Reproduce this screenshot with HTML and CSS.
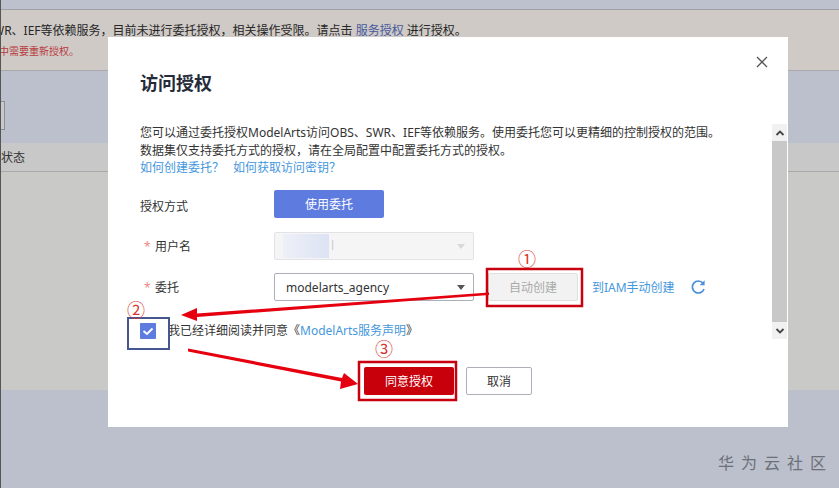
FILE: index.html
```html
<!DOCTYPE html>
<html lang="zh-CN">
<head>
    <meta charset="UTF-8">
    <title>访问授权</title>
    <link rel="stylesheet" href="styles.css">
</head>
<body>
    <div class="page">
        <div class="top-strip"></div>
        <div class="notice">
            <p class="notice-main">WR、IEF等依赖服务，目前未进行委托授权，相关操作受限。请点击 <a class="notice-link">服务授权</a> 进行授权。</p>
            <p class="notice-warn">中需要重新授权。</p>
        </div>
        <div class="toolbar"><div class="search-box"></div></div>
        <div class="table-head">状态</div>
        <div class="table-body"></div>
        <div class="page-foot"><span class="watermark">华为云社区</span></div>
    </div>

    <div class="dialog">
        <h2 class="dialog-title">访问授权</h2>
        <svg class="dialog-close" width="12" height="12" viewBox="0 0 12 12"><path d="M1 1 11 11M11 1 1 11" stroke="#555" stroke-width="1.3" fill="none"/></svg>
        <div class="dialog-body">
            <div class="form">
                <p class="intro">您可以通过委托授权ModelArts访问OBS、SWR、IEF等依赖服务。使用委托您可以更精细的控制授权的范围。<br>数据集仅支持委托方式的授权，请在全局配置中配置委托方式的授权。<br><a class="link">如何创建委托？</a><a class="link link-next">如何获取访问密钥？</a></p>
                <div class="row row-first">
                    <span class="label label-first">授权方式</span>
                    <button class="btn btn-blue">使用委托</button>
                </div>
                <div class="row">
                    <span class="label"><i class="star">*</i>用户名</span>
                    <div class="select select-off">
                        <span class="blur"></span><span class="blur-tail">l</span>
                        <span class="caret caret-off"></span>
                    </div>
                </div>
                <div class="row">
                    <span class="label"><i class="star">*</i>委托</span>
                    <div class="select">
                        <span>modelarts_agency</span>
                        <span class="caret"></span>
                    </div>
                    <button class="btn btn-off">自动创建</button>
                    <a class="link link-iam">到IAM手动创建</a>
                    <svg class="refresh" width="16" height="16" viewBox="0 0 16 16"><path d="M13 4.200A6 6 0 1 0 14 10" stroke="#4a90d9" stroke-width="1.7" fill="none"/><path d="M14.600 1.200V6.200H9.600Z" fill="#4a90d9"/></svg>
                </div>
                <div class="agree">
                    <span class="checkbox"><svg width="16" height="16" viewBox="0 0 16 16"><path d="M3.500 8 7 11 12.500 5.500" stroke="#fff" stroke-width="2" fill="none"/></svg></span>
                    <span class="agree-text">我已经详细阅读并同意《<a class="link">ModelArts服务声明</a>》</span>
                </div>
            </div>
            <div class="scrollbar">
                <div class="scroll-btn"><svg width="10" height="8" viewBox="0 0 10 8"><path d="M1.500 6 5 2.500 8.500 6" stroke="#444" stroke-width="1.8" fill="none"/></svg></div>
                <div class="scroll-thumb"></div>
                <div class="scroll-btn"><svg width="10" height="8" viewBox="0 0 10 8"><path d="M1.500 2 5 5.500 8.500 2" stroke="#444" stroke-width="1.8" fill="none"/></svg></div>
            </div>
        </div>
        <div class="dialog-foot">
            <button class="btn btn-red">同意授权</button>
            <button class="btn btn-plain">取消</button>
        </div>
    </div>

    <svg class="marks" width="839" height="488" viewBox="0 0 839 488">
        <rect x="487" y="269" width="95" height="37" fill="none" stroke="#c8000f" stroke-width="2.500"/>
        <rect x="128" y="318" width="41" height="31" fill="none" stroke="#46568f" stroke-width="2"/>
        <rect x="359" y="362" width="97" height="38" fill="none" stroke="#c8000f" stroke-width="2.500"/>
        <polygon points="489,292.500 489,295 197,317 197,321 181,315 197,308 197,313.500" fill="#e6000f"/>
        <polygon points="188,348.500 188,351.500 341,381.500 340,389 358,384 344,373 342,378" fill="#e6000f"/>
        <text class="mark-num" x="527" y="266">①</text>
        <text class="mark-num" x="136" y="317">②</text>
        <text class="mark-num" x="384" y="356">③</text>
    </svg>
</body>
</html>
```

FILE: styles.css
```css
html, body {
    margin: 0;
    padding: 0;
}
body {
    width: 839px;
    height: 488px;
    overflow: hidden;
    position: relative;
    font-family: "Noto Sans", "Noto Sans CJK SC", sans-serif;
    font-size: 12px;
    color: #333;
}
p {
    margin: 0;
}
.page {
    height: 488px;
    display: flex;
    flex-direction: column;
    overflow: hidden;
    border-left: 1px solid #555;
    background: #bbc0cc;
}
.top-strip {
    height: 9px;
    border-bottom: 1px solid #a09fa6;
    background: #bcc1cd;
}
.notice {
    height: 60px;
    border-bottom: 1px solid #a9a8ab;
    background: #cfcac6;
    white-space: nowrap;
}
.notice-main {
    margin: 12px 0 0 -8px;
    line-height: 17px;
    color: #262626;
}
.notice-link {
    color: #46599c;
}
.notice-warn {
    margin: 5px 0 0 -2px;
    font-size: 10px;
    line-height: 14px;
    color: #b8393c;
}
.toolbar {
    height: 72px;
    padding-top: 30px;
    box-sizing: border-box;
}
.search-box {
    width: 3px;
    height: 27px;
    border: 1px solid #8e8f95;
    border-left: 0;
    background: #c9c9c9;
}
.table-head {
    height: 29px;
    line-height: 30px;
    box-sizing: border-box;
    border-bottom: 1px solid #a9a9aa;
    background: #c8c8c8;
    color: #333;
}
.table-body {
    height: 218px;
    background: #c9c9c8;
}
.page-foot {
    flex: 1;
    display: flex;
    justify-content: flex-end;
    align-items: flex-start;
    padding: 63px 13px 0 0;
}
.watermark {
    font-size: 16px;
    line-height: 20px;
    letter-spacing: 7px;
    margin-right: -7px;
    color: #6e7079;
}
.dialog {
    position: absolute;
    left: 108px;
    top: 37px;
    width: 680px;
    height: 390px;
    box-sizing: border-box;
    padding-left: 32px;
    background: #fff;
}
.dialog-title {
    margin: 0;
    padding-top: 33px;
    height: 87px;
    box-sizing: border-box;
    font-size: 18px;
    line-height: 26px;
    font-weight: bold;
    color: #252b3a;
}
.dialog-close {
    position: absolute;
    right: 20px;
    top: 19px;
}
.dialog-body {
    display: flex;
    justify-content: space-between;
    height: 215px;
    padding-right: 1px;
}
.form {
    width: 600px;
}
.intro {
    line-height: 17.5px;
    white-space: nowrap;
    color: #333;
}
.link {
    color: #4597dd;
}
.link-next {
    margin-left: 9px;
}
.row {
    display: flex;
    align-items: center;
    height: 28px;
    margin-bottom: 13.5px;
}
.row-first {
    margin-top: 13.5px;
}
.label {
    width: 134px;
    flex-shrink: 0;
    color: #333;
}
.label-first {
    padding-top: 3px;
}
.star {
    display: inline-block;
    width: 15px;
    padding-left: 4px;
    box-sizing: border-box;
    font-style: normal;
    color: #e88;
}
.btn {
    height: 28px;
    padding: 0;
    box-sizing: border-box;
    border: 1px solid transparent;
    border-radius: 2px;
    font-family: inherit;
    font-size: 12px;
}
.btn-blue {
    width: 110px;
    background: #5e7ce0;
    color: #fff;
}
.btn-off {
    width: 90px;
    margin-left: 14px;
    background: #f2f2f2;
    border-color: #e0e0e0;
    color: #aaa;
}
.btn-red {
    width: 90px;
    background: #c7000b;
    color: #fff;
}
.btn-plain {
    width: 66px;
    background: #fff;
    border-color: #adb0b8;
    color: #333;
}
.select {
    position: relative;
    width: 200px;
    height: 28px;
    box-sizing: border-box;
    padding-left: 11px;
    display: flex;
    align-items: center;
    flex-shrink: 0;
    border: 1px solid #adb0b8;
    border-radius: 2px;
    color: #333;
}
.select-off {
    padding-left: 8px;
    border-color: #e2e3e6;
    background: #f5f5f6;
}
.blur {
    width: 46px;
    height: 24px;
    background: linear-gradient(90deg, #eef0f8, #dde3f4);
}
.blur-tail {
    margin-left: 2px;
    color: #ccc;
}
.caret {
    position: absolute;
    right: 8px;
    top: 11px;
    border-left: 4px solid transparent;
    border-right: 4px solid transparent;
    border-top: 5px solid #555;
}
.caret-off {
    border-top-color: #d8d8da;
}
.link-iam {
    margin-left: 14px;
}
.refresh {
    margin-left: 15px;
}
.agree {
    display: flex;
    align-items: center;
    margin-top: 22px;
    height: 16px;
}
.checkbox {
    width: 16px;
    height: 16px;
    border-radius: 1px;
    background: #5e7ce0;
}
.checkbox svg {
    display: block;
}
.agree-text {
    margin-left: 12px;
    line-height: 16px;
}
.scrollbar {
    width: 15px;
    display: flex;
    flex-direction: column;
    background: #f1f1f1;
}
.scroll-btn {
    height: 17px;
    display: flex;
    align-items: center;
    justify-content: center;
}
.scroll-thumb {
    flex: 1;
    background: #c8c8c8;
}
.dialog-foot {
    display: flex;
    justify-content: center;
    gap: 12px;
    margin: 28px 0 0 -32px;
}
.marks {
    position: absolute;
    left: 0;
    top: 0;
}
.mark-num {
    font-family: "Noto Sans CJK SC", sans-serif;
    font-size: 18px;
    text-anchor: middle;
    fill: #d8362f;
}
```
